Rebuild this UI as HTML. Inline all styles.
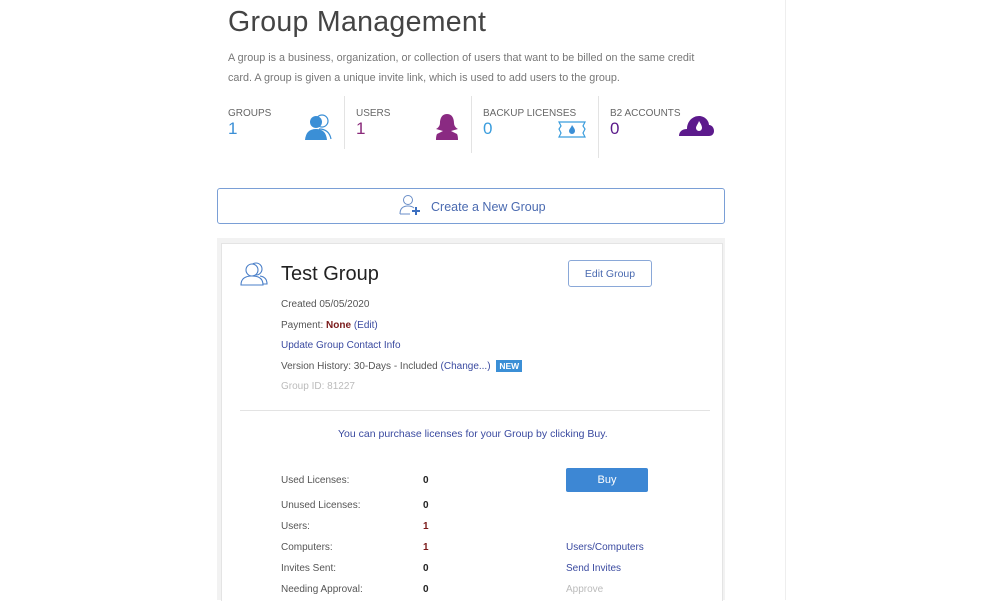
<!DOCTYPE html>
<html><head><meta charset="utf-8"><style>
body{margin:0;width:1000px;height:600px;overflow:hidden;background:#fff;font-family:"Liberation Sans",sans-serif;position:relative}
.a{position:absolute;white-space:nowrap}
.lbl{font-size:10px;color:#666}
.num{font-size:17px}
.r{font-size:10px;color:#555}
.b{font-size:10px;font-weight:bold;color:#222}
.lk{color:#3a4aa0}
</style></head><body>
<div class="a" style="left:785px;top:0;width:1px;height:600px;background:#eee"></div>
<div class="a" style="left:228px;top:6px;font-size:28.5px;color:#444;letter-spacing:0.3px">Group Management</div>
<div class="a" style="left:228px;top:49px;font-size:10.8px;color:#777;line-height:19.5px">A group is a business, organization, or collection of users that want to be billed on the same credit<br>card. A group is given a unique invite link, which is used to add users to the group.</div>

<div class="a lbl" style="left:228px;top:108px">GROUPS</div>
<div class="a num" style="left:228px;top:119px;color:#3b8fd6">1</div>
<svg class="a" style="left:303px;top:113px" width="30" height="28" viewBox="0 0 30 28"><circle cx="19" cy="8" r="6" fill="none" stroke="#3b8fd6" stroke-width="1.2"/><path d="M16 16 q10 0 12 10" fill="none" stroke="#3b8fd6" stroke-width="1.2"/><circle cx="13" cy="9" r="6" fill="#3b8fd6"/><path d="M2 27 q1-11 11-11 q10 0 11 11z" fill="#3b8fd6"/></svg>
<div class="a" style="left:344px;top:96px;width:1px;height:53px;background:#e3e3e3"></div>
<div class="a lbl" style="left:356px;top:108px">USERS</div>
<div class="a num" style="left:356px;top:119px;color:#8a2a7a">1</div>
<svg class="a" style="left:435px;top:113px" width="24" height="28" viewBox="0 0 24 28"><path d="M12 1 c-6 0-7 6-7 9 c0 3-2 5-4 6 l7 2 l-6 3 c-1 2-1 5-1 6 h22 c0-1 0-4-1-6 l-6-3 l7-2 c-2-1-4-3-4-6 c0-3-1-9-7-9z" fill="#8a2a82"/></svg>
<div class="a" style="left:471px;top:96px;width:1px;height:57px;background:#e3e3e3"></div>
<div class="a lbl" style="left:483px;top:108px">BACKUP LICENSES</div>
<div class="a num" style="left:483px;top:119px;color:#3b9ddd">0</div>
<svg class="a" style="left:558px;top:121px" width="28" height="17" viewBox="0 0 28 17"><path d="M1 1 h26 l-2 4 l2 3 l-2 4 l2 4 h-26 l2-4 l-2-4 l2-3z" fill="none" stroke="#3b9ddd" stroke-width="1.2"/><path d="M14 4 c2 3 3 4 3 6 a3 3 0 0 1-6 0 c0-2 2-3 3-6z" fill="#3b8fd6"/></svg>
<div class="a" style="left:598px;top:96px;width:1px;height:62px;background:#e3e3e3"></div>
<div class="a lbl" style="left:610px;top:108px">B2 ACCOUNTS</div>
<div class="a num" style="left:610px;top:119px;color:#5a1a8a">0</div>
<svg class="a" style="left:678px;top:115px" width="36" height="22" viewBox="0 0 36 22"><path d="M1 21 c0-5 4-7 8-7 c0-7 5-13 12-13 c6 0 10 5 10 9 c3 0 5 3 5 6 c0 3-2 5-5 5z" fill="#5c1a8c"/><path d="M21 6 c2 3 3 5 3 7 a3 3 0 0 1-6 0 c0-2 2-4 3-7z" fill="#fff"/></svg>

<div class="a" style="left:217px;top:188px;width:506px;height:34px;border:1px solid #7a9fd6;border-radius:3px"></div>
<svg class="a" style="left:398px;top:194px" width="24" height="22" viewBox="0 0 24 22"><circle cx="10" cy="6" r="4.5" fill="none" stroke="#6a8ec8" stroke-width="1"/><path d="M2 20 q0-8 8-8 q4 0 6 2" fill="none" stroke="#6a8ec8" stroke-width="1"/><path d="M2 20 h10" stroke="#6a8ec8"/><path d="M18 13 v8 M14 17 h8" stroke="#3b6fc0" stroke-width="2"/></svg>
<div class="a" style="left:431px;top:200px;font-size:12.5px;color:#4a6ab0">Create a New Group</div>

<div class="a" style="left:217px;top:238px;width:508px;height:362px;background:#f2f2f2"></div>
<div class="a" style="left:221px;top:243px;width:500px;height:357px;background:#fff;border:1px solid #e4e4e4;border-bottom:none"></div>
<svg class="a" style="left:240px;top:261px" width="28" height="26" viewBox="0 0 28 26"><circle cx="16" cy="8" r="6" fill="none" stroke="#4a7fc8" stroke-width="1.1"/><circle cx="12" cy="9" r="6" fill="#fff" stroke="#4a7fc8" stroke-width="1.1"/><path d="M1 24 q0-9 11-9 q11 0 11 9z" fill="#fff" stroke="#4a7fc8" stroke-width="1.1"/><path d="M20 15 q7 1 7 8 h-4" fill="none" stroke="#4a7fc8" stroke-width="1.1"/></svg>
<div class="a" style="left:281px;top:263px;font-size:20px;color:#222">Test Group</div>
<div class="a" style="left:568px;top:260px;width:82px;height:25px;border:1px solid #8aa8d8;border-radius:3px;font-size:10.5px;color:#4a6ab0;text-align:center;line-height:26px">Edit Group</div>
<div class="a r" style="left:281px;top:299px">Created 05/05/2020</div>
<div class="a r" style="left:281px;top:320px">Payment: <b style="color:#7a1a1a">None</b> <span class="lk">(Edit)</span></div>
<div class="a r lk" style="left:281px;top:340px">Update Group Contact Info</div>
<div class="a r" style="left:281px;top:361px">Version History: 30-Days - Included <span class="lk">(Change...)</span> <span style="background:#3b8fd6;color:#fff;font-size:8.5px;padding:1px 3px;font-weight:bold;margin-left:3px">NEW</span></div>
<div class="a r" style="left:281px;top:381px;color:#bbb">Group ID: 81227</div>
<div class="a" style="left:240px;top:410px;width:470px;height:1px;background:#e3e3e3"></div>
<div class="a r lk" style="left:338px;top:428px;font-size:10.5px">You can purchase licenses for your Group by clicking Buy.</div>

<div class="a r" style="left:281px;top:475px">Used Licenses:</div><div class="a b" style="left:423px;top:475px">0</div>
<div class="a r" style="left:281px;top:500px">Unused Licenses:</div><div class="a b" style="left:423px;top:500px">0</div>
<div class="a r" style="left:281px;top:521px">Users:</div><div class="a b" style="left:423px;top:521px;color:#7a1a1a">1</div>
<div class="a r" style="left:281px;top:542px">Computers:</div><div class="a b" style="left:423px;top:542px;color:#7a1a1a">1</div>
<div class="a r" style="left:281px;top:563px">Invites Sent:</div><div class="a b" style="left:423px;top:563px">0</div>
<div class="a r" style="left:281px;top:584px">Needing Approval:</div><div class="a b" style="left:423px;top:584px">0</div>
<div class="a" style="left:566px;top:468px;width:82px;height:24px;background:#3d87d4;border-radius:2px;color:#fff;font-size:11px;text-align:center;line-height:25px">Buy</div>
<div class="a r lk" style="left:566px;top:542px">Users/Computers</div>
<div class="a r lk" style="left:566px;top:563px">Send Invites</div>
<div class="a r" style="left:566px;top:584px;color:#bbb">Approve</div>
</body></html>
